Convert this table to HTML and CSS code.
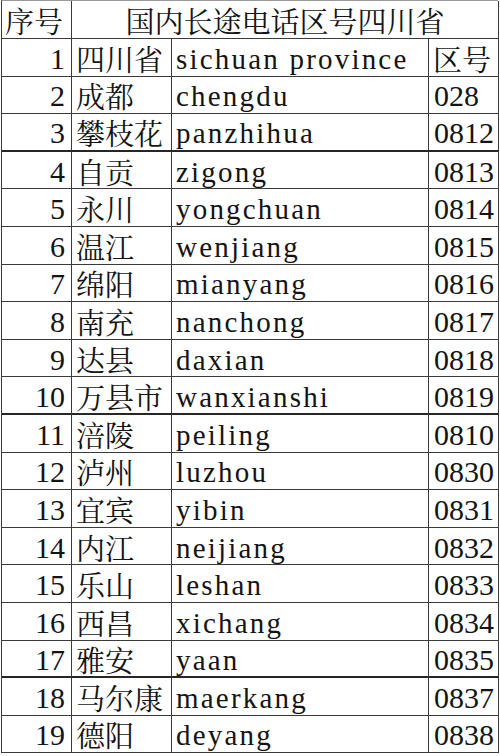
FILE: index.html
```html
<!DOCTYPE html>
<html>
<head>
<meta charset="utf-8">
<link rel="stylesheet" href="styles.css">
</head>
<body>
<div class="sheet">
  <div class="cell hl">序号</div>
  <div class="cell title">国内长途电话区号四川省</div>

  <div class="cell no">1</div><div class="cell cn">四川省</div><div class="cell py">sichuan province</div><div class="cell cn last">区号</div>
  <div class="cell no">2</div><div class="cell cn">成都</div><div class="cell py">chengdu</div><div class="cell code">028</div>
  <div class="cell no thick">3</div><div class="cell cn thick">攀枝花</div><div class="cell py thick">panzhihua</div><div class="cell code thick">0812</div>
  <div class="cell no">4</div><div class="cell cn">自贡</div><div class="cell py">zigong</div><div class="cell code">0813</div>
  <div class="cell no">5</div><div class="cell cn">永川</div><div class="cell py">yongchuan</div><div class="cell code">0814</div>
  <div class="cell no">6</div><div class="cell cn">温江</div><div class="cell py">wenjiang</div><div class="cell code">0815</div>
  <div class="cell no">7</div><div class="cell cn">绵阳</div><div class="cell py">mianyang</div><div class="cell code">0816</div>
  <div class="cell no">8</div><div class="cell cn">南充</div><div class="cell py">nanchong</div><div class="cell code">0817</div>
  <div class="cell no">9</div><div class="cell cn">达县</div><div class="cell py">daxian</div><div class="cell code">0818</div>
  <div class="cell no thick">10</div><div class="cell cn thick">万县市</div><div class="cell py thick">wanxianshi</div><div class="cell code thick">0819</div>
  <div class="cell no">11</div><div class="cell cn">涪陵</div><div class="cell py">peiling</div><div class="cell code">0810</div>
  <div class="cell no">12</div><div class="cell cn">泸州</div><div class="cell py">luzhou</div><div class="cell code">0830</div>
  <div class="cell no">13</div><div class="cell cn">宜宾</div><div class="cell py">yibin</div><div class="cell code">0831</div>
  <div class="cell no">14</div><div class="cell cn">内江</div><div class="cell py">neijiang</div><div class="cell code">0832</div>
  <div class="cell no">15</div><div class="cell cn">乐山</div><div class="cell py">leshan</div><div class="cell code">0833</div>
  <div class="cell no">16</div><div class="cell cn">西昌</div><div class="cell py">xichang</div><div class="cell code">0834</div>
  <div class="cell no thick">17</div><div class="cell cn thick">雅安</div><div class="cell py thick">yaan</div><div class="cell code thick">0835</div>
  <div class="cell no">18</div><div class="cell cn">马尔康</div><div class="cell py">maerkang</div><div class="cell code">0837</div>
  <div class="cell no">19</div><div class="cell cn">德阳</div><div class="cell py">deyang</div><div class="cell code">0838</div>
</div>
</body>
</html>
```
FILE: styles.css
```css
html, body {
  margin: 0;
  padding: 0;
  background: #ffffff;
}
.sheet {
  margin-left: 1px;
  width: 497px;
  box-sizing: border-box;
  display: grid;
  grid-template-columns: 70px 100px 257px 70px;
  grid-template-rows: 38px repeat(19, 37.6px);
  border-top: 1px solid #9a9a9a;
  border-left: 1px solid #3a3a3a;
  color: #141414;
}
.cell {
  box-sizing: border-box;
  display: flex;
  align-items: center;
  padding: 3px 5px 0 5px;
  border-right: 1px solid #3a3a3a;
  border-bottom: 1px solid #3a3a3a;
  white-space: nowrap;
  overflow: visible;
  line-height: 30px;
  font-family: "Liberation Serif", "Times New Roman";
  font-size: 30px;
}
.cell.thick {
  border-bottom: 2px solid #262626;
}
.hl {
  padding-left: 3px;
  font-family: "Noto Serif CJK SC", serif;
  font-size: 29px;
}
.title {
  grid-column: 2 / 5;
  justify-content: center;
  font-family: "Noto Serif CJK SC", serif;
  font-size: 29px;
}
.no {
  justify-content: flex-end;
  padding-right: 6px;
}
.cn {
  padding-left: 4px;
  font-family: "Noto Serif CJK SC", serif;
  font-size: 29px;
}
.py {
  padding-left: 4px;
  letter-spacing: 2.2px;
  font-size: 29px;
}
.code {
  padding-left: 5px;
}
```
